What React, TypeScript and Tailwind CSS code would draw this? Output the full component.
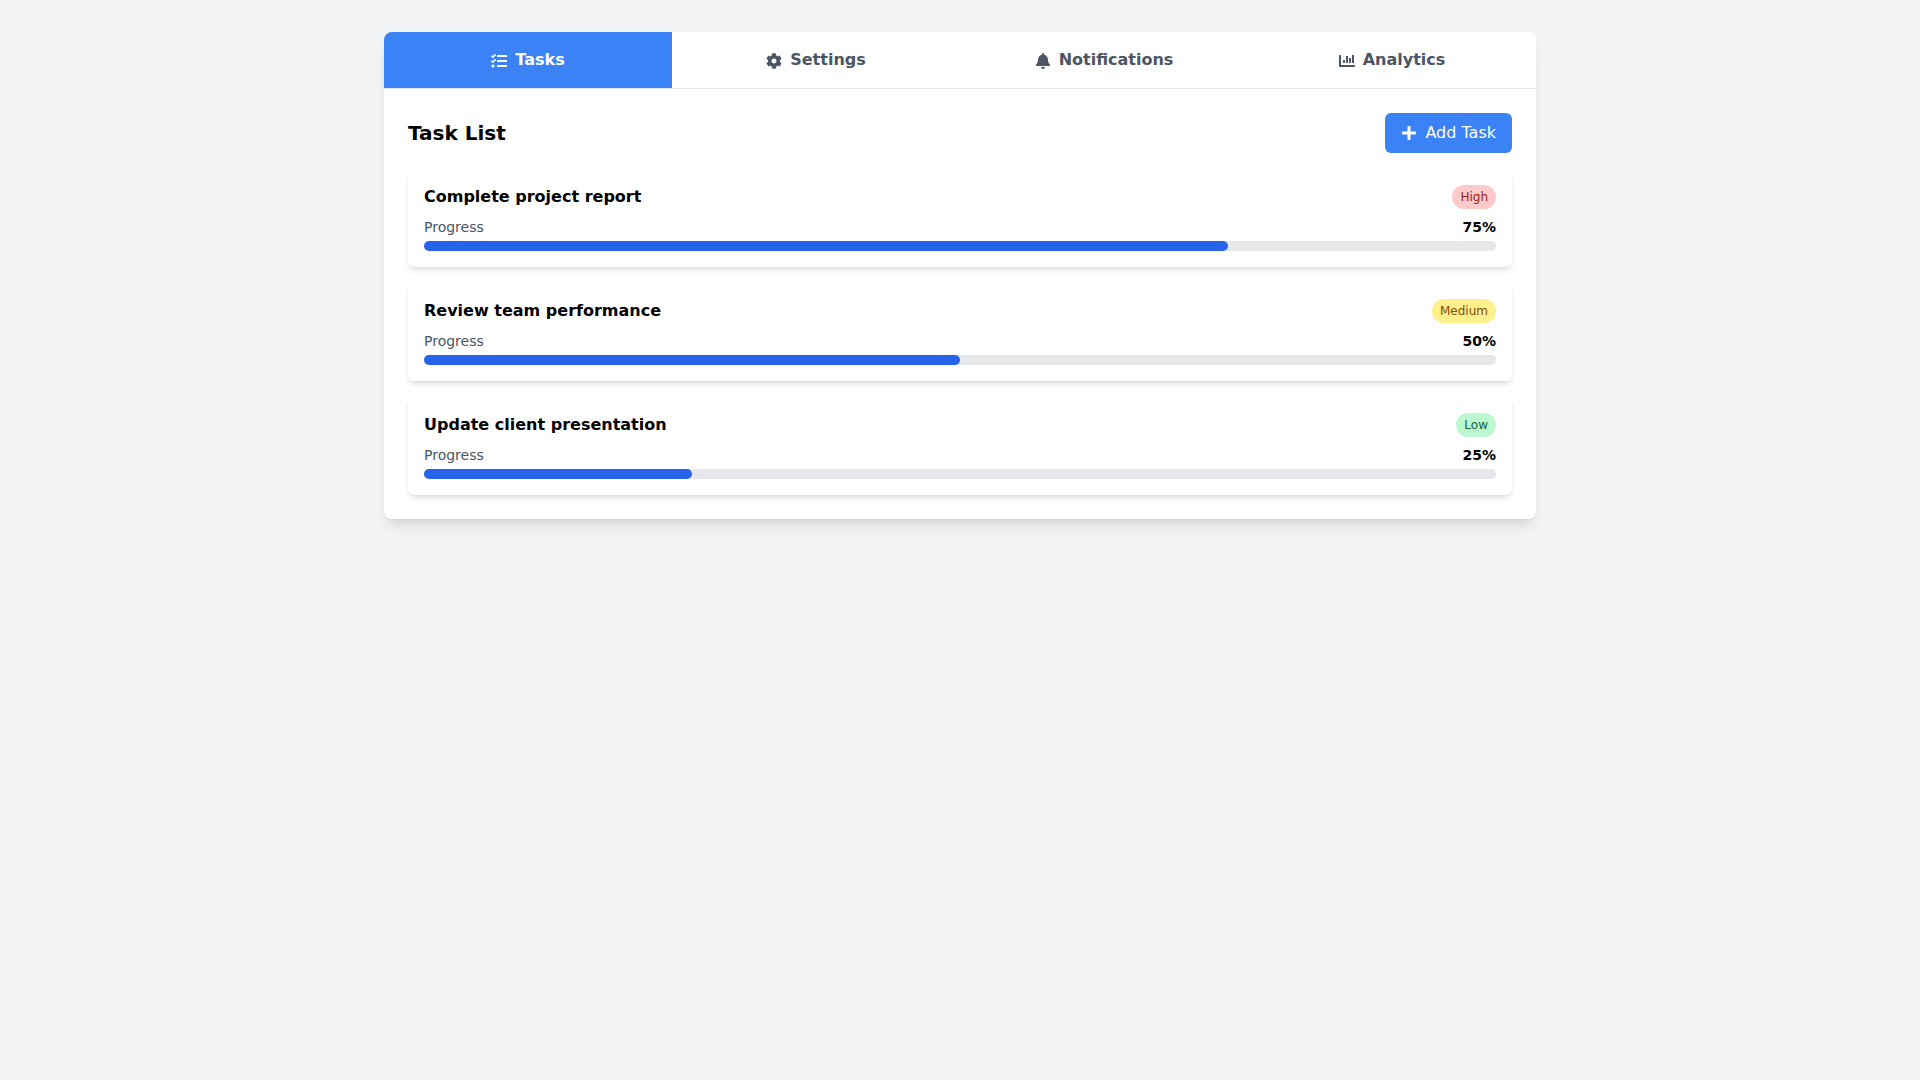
import { useState } from 'react'
import type { IconType } from 'react-icons'
import { FaBell, FaChartBar, FaCog, FaPlus, FaTasks } from 'react-icons/fa'

type Priority = 'High' | 'Medium' | 'Low'

interface Task {
  id: number
  title: string
  priority: Priority
  progress: number
}

const TABS: { id: string; label: string; Icon: IconType }[] = [
  { id: 'tasks', label: 'Tasks', Icon: FaTasks },
  { id: 'settings', label: 'Settings', Icon: FaCog },
  { id: 'notifications', label: 'Notifications', Icon: FaBell },
  { id: 'analytics', label: 'Analytics', Icon: FaChartBar }
]

const TASKS: Task[] = [
  { id: 1, title: 'Complete project report', priority: 'High', progress: 75 },
  { id: 2, title: 'Review team performance', priority: 'Medium', progress: 50 },
  { id: 3, title: 'Update client presentation', priority: 'Low', progress: 25 }
]

const PRIORITY_STYLES: Record<Priority, string> = {
  High: 'bg-[#fecaca] text-[#991b1b]',
  Medium: 'bg-[#fef08a] text-[#854d0e]',
  Low: 'bg-[#bbf7d0] text-[#166534]'
}

function TaskCard({ task }: { task: Task }): React.JSX.Element {
  return (
    <div className="rounded-md bg-white p-4 shadow-md">
      <div className="mb-2 flex items-center justify-between">
        <h3 className="font-semibold">{task.title}</h3>
        <span className={`rounded-full px-2 py-1 text-xs ${PRIORITY_STYLES[task.priority]}`}>
          {task.priority}
        </span>
      </div>
      <div className="mb-1 flex items-center justify-between text-sm">
        <span className="text-[#4b5563]">Progress</span>
        <span className="font-semibold">{task.progress}%</span>
      </div>
      <div className="h-2.5 w-full rounded-full bg-[#e5e7eb]">
        <div className="h-2.5 rounded-full bg-[#2563eb]" style={{ width: `${task.progress}%` }} />
      </div>
    </div>
  )
}

function App(): React.JSX.Element {
  const [activeTab, setActiveTab] = useState('tasks')

  return (
    <div className="min-h-screen bg-[#f3f4f6] p-8 font-['DejaVu_Sans',sans-serif] text-black">
      <div className="mx-auto max-w-6xl overflow-hidden rounded-lg bg-white shadow-lg">
        <div className="flex border-b border-[#e5e7eb]">
          {TABS.map(({ id, label, Icon }) => (
            <button
              key={id}
              type="button"
              onClick={() => setActiveTab(id)}
              className={`flex-1 px-6 py-4 text-center font-semibold ${
                activeTab === id ? 'bg-[#3b82f6] text-white' : 'text-[#4b5563]'
              }`}
            >
              <Icon className="mr-2 inline-block" />
              {label}
            </button>
          ))}
        </div>

        {activeTab === 'tasks' && (
          <div className="p-6">
            <div className="mb-4 flex items-center justify-between">
              <h2 className="text-xl font-semibold">Task List</h2>
              <button
                type="button"
                className="flex items-center rounded-md bg-[#3b82f6] px-4 py-2 text-white"
              >
                <FaPlus className="mr-2" />
                Add Task
              </button>
            </div>
            <div className="space-y-4">
              {TASKS.map((task) => (
                <TaskCard key={task.id} task={task} />
              ))}
            </div>
          </div>
        )}
      </div>
    </div>
  )
}

export default App
